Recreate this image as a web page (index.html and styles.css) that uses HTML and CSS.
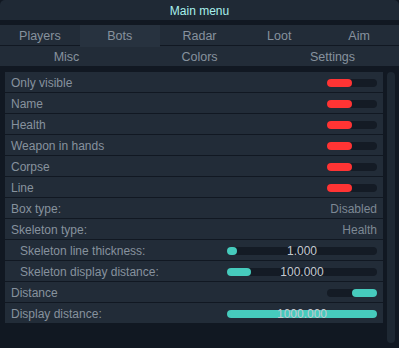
FILE: index.html
```html
<!DOCTYPE html>
<html lang="en">
<head>
    <meta charset="UTF-8">
    <meta name="viewport" content="width=device-width, initial-scale=1.0">
    <title>Main menu</title>
    <link rel="stylesheet" href="styles.css">
</head>
<body>
    <div class="title">Main menu</div>

    <div class="tabs tabs-5">
        <div class="tab">Players</div>
        <div class="tab active">Bots</div>
        <div class="tab">Radar</div>
        <div class="tab">Loot</div>
        <div class="tab">Aim</div>
    </div>
    <div class="tabs tabs-3">
        <div class="tab">Misc</div>
        <div class="tab">Colors</div>
        <div class="tab">Settings</div>
    </div>

    <div class="content">
        <div class="list">
            <div class="row"><span>Only visible</span><div class="toggle"><div class="knob off"></div></div></div>
            <div class="row"><span>Name</span><div class="toggle"><div class="knob off"></div></div></div>
            <div class="row"><span>Health</span><div class="toggle"><div class="knob off"></div></div></div>
            <div class="row"><span>Weapon in hands</span><div class="toggle"><div class="knob off"></div></div></div>
            <div class="row"><span>Corpse</span><div class="toggle"><div class="knob off"></div></div></div>
            <div class="row"><span>Line</span><div class="toggle"><div class="knob off"></div></div></div>
            <div class="row"><span>Box type:</span><span class="value">Disabled</span></div>
            <div class="row"><span>Skeleton type:</span><span class="value">Health</span></div>
            <div class="row sub">
                <span>Skeleton line thickness:</span>
                <div class="slider"><div class="fill" style="width: 10px"></div><span class="num">1.000</span></div>
            </div>
            <div class="row sub">
                <span>Skeleton display distance:</span>
                <div class="slider"><div class="fill" style="width: 24px"></div><span class="num">100.000</span></div>
            </div>
            <div class="row"><span>Distance</span><div class="toggle on"><div class="knob"></div></div></div>
            <div class="row">
                <span>Display distance:</span>
                <div class="slider"><div class="fill" style="width: 150px"></div><span class="num">1000.000</span></div>
            </div>
        </div>
        <div class="scrollbar"></div>
    </div>
</body>
</html>
```

FILE: styles.css
```css
body {
    margin: 0;
    background-color: #111822;
    font-family: "Liberation Sans", Arial, sans-serif;
    font-size: 12px;
    color: #87929e;
    width: 399px;
    height: 348px;
    overflow: hidden;
}
.title {
    height: 20px;
    line-height: 23px;
    background-color: #1f2935;
    border-radius: 5px 5px 0 0;
    color: #a8f0ec;
    text-align: center;
    margin-bottom: 5px;
}
.tabs {
    display: grid;
    height: 20px;
    background-color: #222c38;
}
.tabs-5 {
    grid-template-columns: repeat(5, 1fr);
    margin-bottom: 1px;
}
.tabs-3 {
    grid-template-columns: repeat(3, 1fr);
}
.tab {
    text-align: center;
    line-height: 22px;
    font-size: 12.5px;
}
.tab.active {
    background-color: #27323f;
}
.content {
    display: flex;
    margin-top: 6px;
    padding-left: 5px;
}
.list {
    width: 378px;
    display: flex;
    flex-direction: column;
    gap: 1px;
}
.row {
    height: 20px;
    background-color: #222c38;
    display: flex;
    align-items: center;
    justify-content: space-between;
    padding: 1px 6px 0 6px;
    box-sizing: border-box;
}
.row.sub {
    padding-left: 15px;
}
.value {
    color: #7d8894;
}
.toggle {
    width: 50px;
    height: 8px;
    border-radius: 4px;
    background-color: #141b25;
    display: flex;
}
.toggle.on {
    justify-content: flex-end;
}
.knob {
    width: 25px;
    height: 8px;
    border-radius: 4px;
    background-color: #46cbbd;
}
.knob.off {
    background-color: #ff3434;
}
.slider {
    position: relative;
    width: 150px;
    height: 8px;
    border-radius: 4px;
    background-color: #141b25;
}
.fill {
    height: 8px;
    border-radius: 4px;
    background-color: #46cbbd;
}
.num {
    position: absolute;
    left: 0;
    right: 0;
    top: -3px;
    text-align: center;
    color: #c3c9d0;
    line-height: 14px;
}
.scrollbar {
    width: 8px;
    height: 271px;
    margin-left: 4px;
    border-radius: 4px;
    background-color: #1e2833;
}
```
